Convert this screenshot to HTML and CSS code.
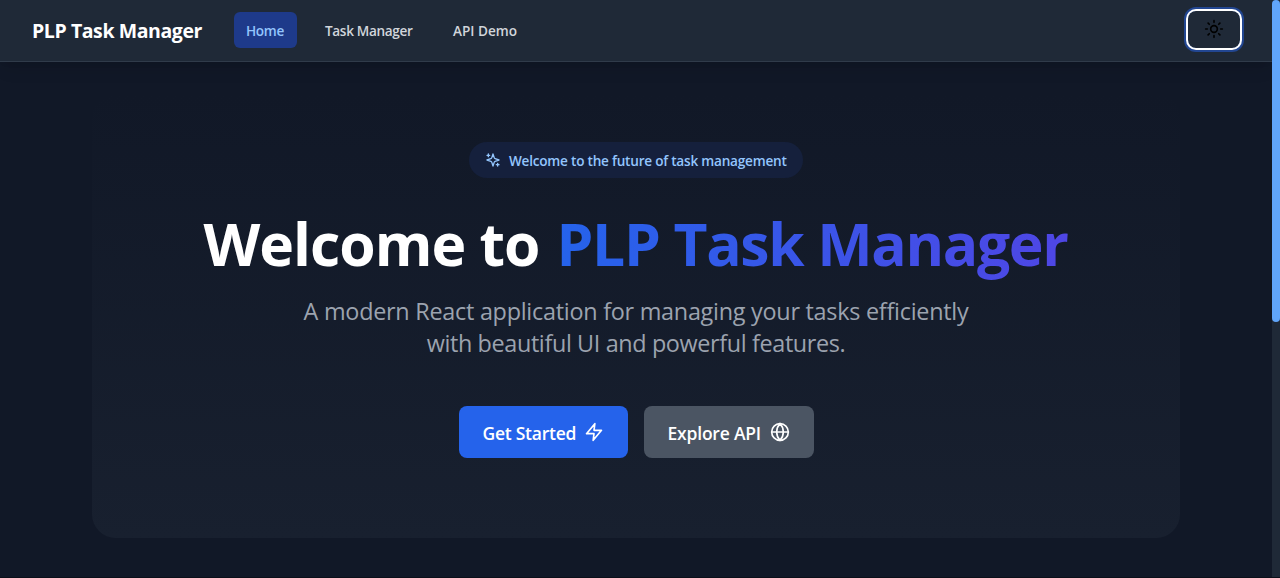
FILE: index.html
```html
<!DOCTYPE html>
<html lang="en">
<head>
<meta charset="utf-8">
<title>PLP Task Manager</title>
<link rel="stylesheet" href="styles.css">
</head>
<body>
<div class="app">
  <div class="page">
    <header class="navbar">
      <span class="brand">PLP Task Manager</span>
      <nav class="links">
        <a class="link link-active"><span class="t-home">Home</span></a>
        <a class="link"><span class="t-tasks">Task Manager</span></a>
        <a class="link"><span class="t-api">API Demo</span></a>
      </nav>
      <button class="toggle" aria-label="Toggle theme">
        <svg width="20" height="20" viewBox="0 0 24 24" fill="none" stroke="currentColor" stroke-width="2" stroke-linecap="round" stroke-linejoin="round"><circle cx="12" cy="12" r="4"/><path d="M12 2v2M12 20v2M4.93 4.93l1.41 1.41M17.66 17.66l1.41 1.41M2 12h2M20 12h2M6.34 17.66l-1.41 1.41M19.07 4.93l-1.41 1.41"/></svg>
      </button>
    </header>
    <main class="main">
      <section class="hero">
        <div class="pill">
          <svg width="16" height="16" viewBox="0 0 24 24" fill="none" stroke="currentColor" stroke-width="2" stroke-linecap="round" stroke-linejoin="round"><path d="m12 3-1.912 5.813a2 2 0 0 1-1.275 1.275L3 12l5.813 1.912a2 2 0 0 1 1.275 1.275L12 21l1.912-5.813a2 2 0 0 1 1.275-1.275L21 12l-5.813-1.912a2 2 0 0 1-1.275-1.275L12 3Z"/><path d="M5 3v4M3 5h4M19 17v4M17 19h4"/></svg>
          <span class="pill-text">Welcome to the future of task management</span>
        </div>
        <h1 class="title"><span class="title-a">Welcome to</span> <span class="title-b">PLP Task Manager</span></h1>
        <p class="lead"><span class="lead-a">A modern React application for managing your tasks efficiently</span> <span class="lead-b">with beautiful UI and powerful features.</span></p>
        <div class="actions">
          <a class="btn btn-primary"><span class="btn-text">Get Started</span>
            <svg width="20" height="20" viewBox="0 0 24 24" fill="none" stroke="currentColor" stroke-width="2" stroke-linecap="round" stroke-linejoin="round"><polygon points="13 2 3 14 12 14 11 22 21 10 12 10 13 2"/></svg>
          </a>
          <a class="btn btn-secondary"><span class="btn-text">Explore API</span>
            <svg width="20" height="20" viewBox="0 0 24 24" fill="none" stroke="currentColor" stroke-width="2" stroke-linecap="round" stroke-linejoin="round"><circle cx="12" cy="12" r="10"/><path d="M12 2a14.5 14.5 0 0 0 0 20 14.5 14.5 0 0 0 0-20M2 12h20"/></svg>
          </a>
        </div>
      </section>
    </main>
  </div>
  <div class="scrollbar"><div class="thumb"></div></div>
</div>
</body>
</html>
```
FILE: styles.css
```css
* { box-sizing: border-box; }
body {
  margin: 0;
  background: #111827;
  color: #fff;
  font-family: "Open Sans", "Noto Sans", sans-serif;
  overflow: hidden;
}
svg { flex: none; }
.app { display: flex; height: 578px; border-bottom: 1px solid #0b0f19; }
.page { flex: 1; min-width: 0; }
.scrollbar { width: 8px; background: #1f2937; }
.thumb { height: 322px; background: #60a5fa; border-radius: 4px; }
.navbar {
  display: flex;
  align-items: center;
  height: 62px;
  padding: 0 32px;
  background: #1f2937;
  border-bottom: 1px solid #303b4a;
  box-shadow: 0 10px 15px -3px rgba(0, 0, 0, 0.1), 0 4px 6px -4px rgba(0, 0, 0, 0.1);
}
.brand { width: 170px; font-size: 19.5px; line-height: 28px; font-weight: 700; white-space: nowrap; letter-spacing: -0.42px; }
.links { display: flex; gap: 16px; margin: -2px 0 0 32px; }
.link {
  display: flex;
  height: 36px;
  padding: 9px 12px 7px;
  border-radius: 6px;
  font-size: 13.6px;
  line-height: 20px;
  font-weight: 600;
  letter-spacing: -0.35px;
  color: #d1d5db;
  white-space: nowrap;
}
.link-active { background: #1e3a8a; color: #93c5fd; }
.t-home { width: 39px; }
.t-tasks { width: 88px; }
.t-api { width: 65px; letter-spacing: 0; }
.toggle {
  display: flex;
  align-items: center;
  justify-content: center;
  width: 52px;
  height: 37px;
  margin: -3px 0 0 auto;
  padding: 0;
  border: 0;
  border-radius: 8px;
  background: transparent;
  color: #000;
  box-shadow: 0 0 0 2px #fff, 0 0 0 4px rgba(37, 99, 235, 0.5);
}
.main { padding: 32px 92px 0; }
.hero {
  display: flex;
  flex-direction: column;
  align-items: center;
  height: 444px;
  padding-top: 48px;
  border-radius: 24px;
  background: linear-gradient(to bottom, #111827, #18202f);
}
.pill {
  display: flex;
  align-items: center;
  gap: 8px;
  width: 334px;
  height: 36px;
  padding: 0 16px;
  border-radius: 18px;
  background: #15203c;
  color: #93c5fd;
  font-size: 13.6px;
  line-height: 20px;
  font-weight: 600;
  letter-spacing: -0.23px;
  white-space: nowrap;
}
.pill-text { padding-top: 1px; }
.title {
  display: flex;
  gap: 19px;
  margin: 35px 0 0;
  height: 60px;
  font-size: 58.8px;
  line-height: 60px;
  font-weight: 700;
  white-space: nowrap;
}
.title-a { width: 337px; letter-spacing: -1px; }
.title-b {
  width: 514px;
  height: 78px;
  margin: 0 -2px 0 -3px;
  letter-spacing: -1.35px;
  background: linear-gradient(to right, #2563eb, #4f46e5);
  -webkit-background-clip: text;
  background-clip: text;
  color: transparent;
}
.lead {
  display: flex;
  flex-direction: column;
  align-items: center;
  margin: 22px 0 0;
  font-size: 23.4px;
  line-height: 32px;
  color: #9ca3af;
  white-space: nowrap;
}
.lead-a { letter-spacing: -0.26px; }
.lead-b { letter-spacing: -0.37px; }
.actions { display: flex; gap: 16px; margin: 47px 0 0; }
.btn {
  display: flex;
  align-items: center;
  gap: 8px;
  width: 169px;
  height: 52px;
  padding: 0 24px;
  border-radius: 8px;
  font-size: 17.5px;
  line-height: 28px;
  font-weight: 600;
  letter-spacing: -0.25px;
  white-space: nowrap;
}
.btn-text { width: 93px; padding-top: 1px; }
.btn-primary { background: #2563eb; }
.btn-secondary { width: 170px; background: #4b5563; }
.btn-secondary .btn-text { width: 94px; letter-spacing: -0.2px; }
```
